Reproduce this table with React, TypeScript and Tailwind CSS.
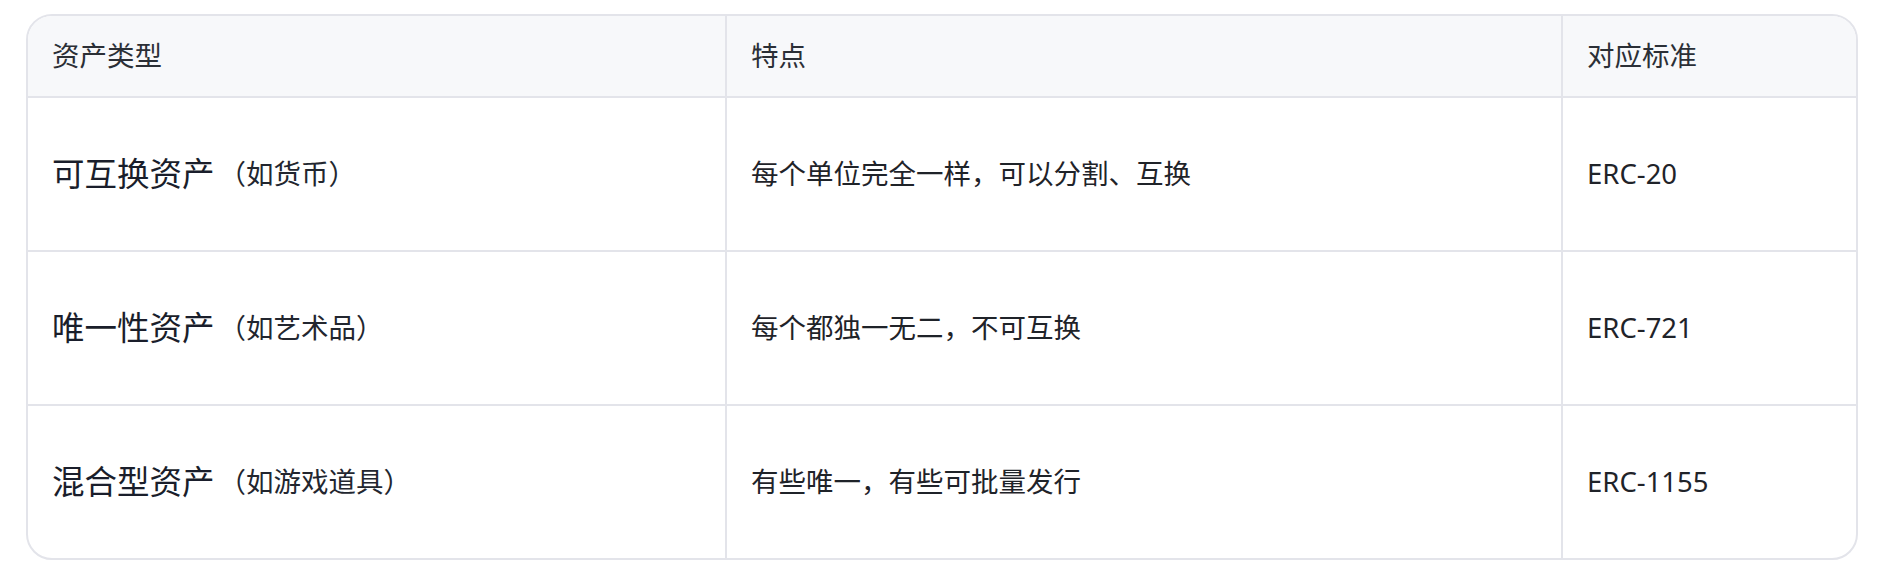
import React from 'react';

const rows = [
  { type: '可互换资产', note: '（如货币）', feature: '每个单位完全一样，可以分割、互换', standard: 'ERC-20' },
  { type: '唯一性资产', note: '（如艺术品）', feature: '每个都独一无二，不可互换', standard: 'ERC-721' },
  { type: '混合型资产', note: '（如游戏道具）', feature: '有些唯一，有些可批量发行', standard: 'ERC-1155' },
];

export default function App() {
  return (
    <div
      className="min-h-screen bg-white px-[26px] pt-[14px] text-[#1f2329]"
      style={{ fontFamily: '"Noto Sans", "Noto Sans CJK SC", sans-serif' }}
    >
      <div className="overflow-hidden rounded-[26px] border-2 border-[#e3e4ea]">
        <div className="grid grid-cols-[699px_836px_1fr]">
          {/* Header */}
          <div className="flex h-[82px] items-center border-r-2 border-b-2 border-[#e3e4ea] bg-[#f7f8fa] px-6 text-[27.5px] text-[#2b2f36]">
            资产类型
          </div>
          <div className="flex h-[82px] items-center border-r-2 border-b-2 border-[#e3e4ea] bg-[#f7f8fa] px-6 text-[27.5px] text-[#2b2f36]">
            特点
          </div>
          <div className="flex h-[82px] items-center border-b-2 border-[#e3e4ea] bg-[#f7f8fa] px-6 text-[27.5px] text-[#2b2f36]">
            对应标准
          </div>

          {/* Body */}
          {rows.map((row, i) => {
            const last = i === rows.length - 1;
            return (
              <React.Fragment key={row.standard}>
                <div
                  className={
                    last
                      ? 'flex h-[152px] items-center border-r-2 border-[#e3e4ea] px-6'
                      : 'flex h-[154px] items-center border-r-2 border-b-2 border-[#e3e4ea] px-6'
                  }
                >
                  <span className="text-[32.5px] text-[#1a1e2b]">{row.type}</span>
                  <span className="ml-[4px] text-[27.5px] text-[#22262f]">{row.note}</span>
                </div>
                <div
                  className={
                    last
                      ? 'flex h-[152px] items-center border-r-2 border-[#e3e4ea] px-6 text-[27.5px]'
                      : 'flex h-[154px] items-center border-r-2 border-b-2 border-[#e3e4ea] px-6 text-[27.5px]'
                  }
                >
                  {row.feature}
                </div>
                <div
                  className={
                    last
                      ? 'flex h-[152px] items-center px-6 text-[27.5px]'
                      : 'flex h-[154px] items-center border-b-2 border-[#e3e4ea] px-6 text-[27.5px]'
                  }
                >
                  {row.standard}
                </div>
              </React.Fragment>
            );
          })}
        </div>
      </div>
    </div>
  );
}
